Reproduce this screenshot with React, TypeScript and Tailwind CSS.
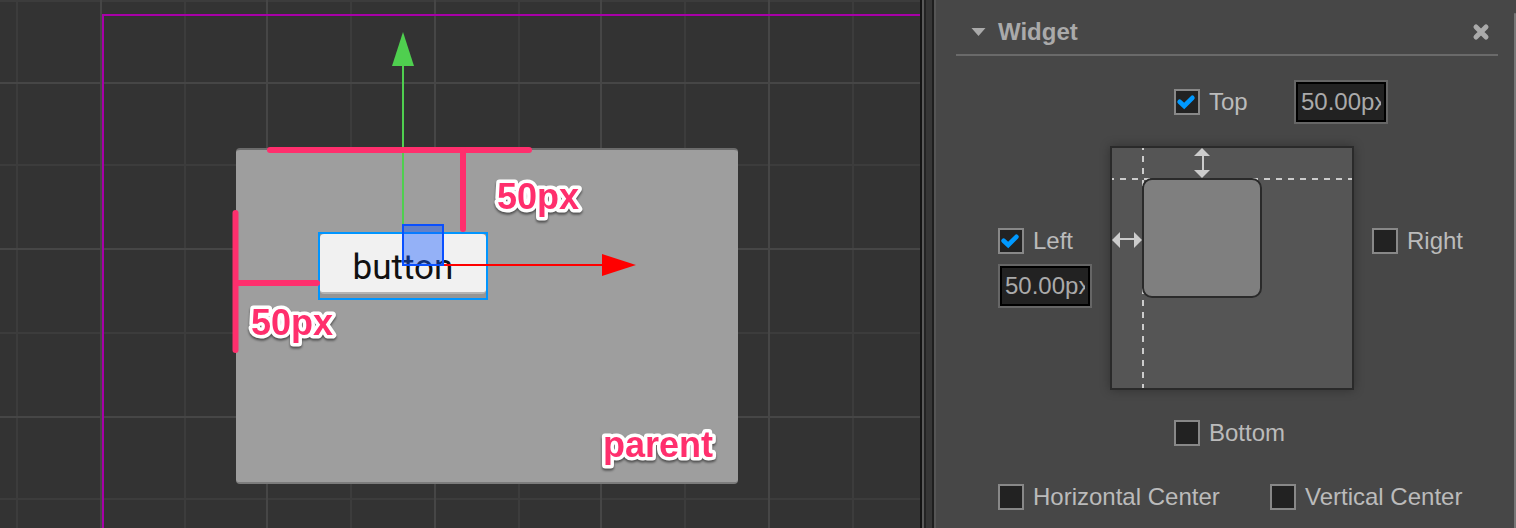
const majorX = [100, 266, 434, 600, 768];
const minorX = [16, 184, 350, 518, 684, 852];
const majorY = [82, 248, 416];
const minorY = [0, 164, 332, 498];

function GridLines() {
  return (
    <svg className="absolute inset-0 h-full w-full" aria-hidden="true" shapeRendering="crispEdges">
      {minorX.map((x) => (
        <rect key={x} x={x} y="0" width="2" height="100%" fill="#3c3c3c" />
      ))}
      {minorY.map((y) => (
        <rect key={y} x="0" y={y} width="100%" height="2" fill="#3c3c3c" />
      ))}
      {majorX.map((x) => (
        <rect key={x} x={x} y="0" width="2" height="100%" fill="#464646" />
      ))}
      {majorY.map((y) => (
        <rect key={y} x="0" y={y} width="100%" height="2" fill="#464646" />
      ))}
    </svg>
  );
}

function Overlay() {
  return (
    <svg className="pointer-events-none absolute top-0 left-0 h-[528px] w-[920px]" viewBox="0 0 920 528">
      <rect x="402" y="64" width="2" height="160" fill="#4fcf4f" />
      <path d="M403 32 L414 66 H392 Z" fill="#4fcf4f" />
      <rect x="444" y="264" width="160" height="2" fill="#ff0000" />
      <path d="M636 265 L602 254 V276 Z" fill="#ff0000" />
      <rect x="403" y="225" width="40" height="40" fill="#1457ff" fillOpacity="0.42" stroke="#0a50ff" strokeWidth="2" />
      <g stroke="#ff2f6d" strokeWidth="6" strokeLinecap="round" fill="none">
        <path d="M270 150 H529" />
        <path d="M463 150 V229" />
        <path d="M235.500 213 V350" />
        <path d="M236 283 H317" />
      </g>
      <g
        className="text-4xl font-bold drop-shadow-[0_2px_1px_rgba(0,0,0,0.5)]"
        fill="#ff2f6d"
        stroke="#ffffff"
        strokeWidth="7"
        strokeLinejoin="round"
        paintOrder="stroke"
      >
        <text x="497" y="209">50px</text>
        <text x="251" y="335">50px</text>
        <text x="603" y="457">parent</text>
      </g>
    </svg>
  );
}

function Scene() {
  return (
    <main className="relative min-w-0 flex-1 overflow-hidden bg-[#333333]">
      <GridLines />
      <div className="absolute top-[14px] -right-1 -bottom-1 left-[102px] border-2 border-[#a800a8]" />
      <div className="absolute top-[148px] left-[236px] h-[336px] w-[502px] rounded border-y-2 border-t-[#6c6c6c] border-b-[#7c7c7c] bg-[#9e9e9e]" />
      <div className="absolute top-[232px] left-[318px] h-[68px] w-[170px] border-2 border-[#0095ff] bg-[#959595]">
        <button
          type="button"
          className="block h-[60px] w-full rounded border-b-2 border-[#b4b4b4] bg-[#f1f1f1] pt-[10px] font-[Roboto,sans-serif] text-[35px] leading-[48px] text-[#111111]"
        >
          button
        </button>
      </div>
      <Overlay />
    </main>
  );
}

function CheckField({ label, checked = false, className = "" }: { label: string; checked?: boolean; className?: string }) {
  return (
    <label className={`flex items-center gap-[9px] leading-[26px] whitespace-nowrap ${className}`}>
      <span className="grid size-[26px] shrink-0">
        <input
          type="checkbox"
          defaultChecked={checked}
          className="peer col-start-1 row-start-1 size-full appearance-none border-2 border-[#888888] bg-[#222222]"
        />
        <svg
          viewBox="0 0 26 26"
          className="pointer-events-none invisible col-start-1 row-start-1 size-full peer-checked:visible"
          fill="none"
          stroke="#0099ff"
          strokeWidth="4.600"
          aria-hidden="true"
        >
          <path d="M5.600 12.700 L10.200 17 L18.400 8.800" strokeLinecap="round" />
        </svg>
      </span>
      {label}
    </label>
  );
}

function MarginInput({ name }: { name: string }) {
  return (
    <input
      type="text"
      aria-label={name}
      defaultValue="50.00px"
      className="block h-11 w-[94px] border-2 border-[#666666] bg-[#222222] px-[5px] text-[#aaaaaa] shadow-[inset_0_0_0_2px_#000000] outline-none"
    />
  );
}

function AlignmentPreview() {
  return (
    <svg viewBox="0 0 244 244" className="size-[244px] shadow-[0_0_10px_rgba(0,0,0,0.3)]" role="img" aria-label="Alignment preview">
      <rect x="1" y="1" width="242" height="242" fill="#555555" stroke="#2a2a2a" strokeWidth="2" />
      <g stroke="#cccccc" strokeWidth="2" strokeDasharray="6 6">
        <path d="M33 2 V242" strokeDashoffset="4" />
        <path d="M2 33 H242" strokeDashoffset="4" />
      </g>
      <rect x="33" y="33" width="118" height="118" rx="9" fill="#7f7f7f" stroke="#2a2a2a" strokeWidth="2" />
      <g fill="#cccccc">
        <path d="M92 2 L100 10 H94 V24 H100 L92 32 L84 24 H92 V10 H84 Z" />
        <path d="M2 94 L10 86 V92 H24 V86 L32 94 L24 102 V94 H10 V102 Z" />
      </g>
    </svg>
  );
}

function Inspector() {
  return (
    <aside className="relative w-[582px] shrink-0 border-l-2 border-[#555555] bg-[#474747] text-2xl text-[#bbbbbb]">
      <header className="mr-[18px] ml-5 flex h-14 items-center border-b-2 border-[#6a6a6a] pt-[10px] text-[#aaaaaa]">
        <button type="button" className="flex items-center gap-3 pl-[15px] font-bold">
          <svg viewBox="0 0 15 8" className="h-2 w-[15px]" fill="currentColor" aria-hidden="true">
            <path d="M0.500 0 H14.500 L7.500 8 Z" />
          </svg>
          Widget
        </button>
        <button type="button" aria-label="Remove" className="mr-2 ml-auto">
          <svg viewBox="0 0 18 18" className="size-[18px]" stroke="currentColor" strokeWidth="5" aria-hidden="true">
            <path d="M4 4 L14 14 M14 4 L4 14" strokeLinecap="round" />
          </svg>
        </button>
      </header>
      <form className="pt-6 pl-[62px]">
        <div className="grid grid-cols-[94px_244px_1fr] gap-x-[18px]">
          <div className="col-span-2 col-start-2 mb-[22px] flex items-center pl-16">
            <CheckField label="Top" checked className="w-[120px]" />
            <MarginInput name="Top margin" />
          </div>
          <div className="col-start-1 flex h-20 flex-col justify-between self-center">
            <CheckField label="Left" checked />
            <MarginInput name="Left margin" />
          </div>
          <AlignmentPreview />
          <div className="h-20 self-center">
            <CheckField label="Right" />
          </div>
          <CheckField label="Bottom" className="col-start-2 mt-[30px] pl-16" />
        </div>
        <div className="mt-[38px] flex">
          <CheckField label="Horizontal Center" className="w-[272px]" />
          <CheckField label="Vertical Center" />
        </div>
      </form>
      <div className="absolute top-[13px] right-0 bottom-0 w-0.5 rounded-t bg-[#777777]" />
    </aside>
  );
}

export default function App() {
  return (
    <div className="flex min-h-screen font-['Liberation_Sans',Arial,sans-serif]">
      <Scene />
      <div className="flex w-[14px] shrink-0 bg-[#363636]">
        <div className="w-0.5 bg-[#141414]" />
        <div className="w-0.5 bg-[#5a5a5a]" />
        <div className="w-0.5 bg-[#242424]" />
        <div className="ml-auto w-0.5 bg-[#1e1e1e]" />
      </div>
      <Inspector />
    </div>
  );
}
